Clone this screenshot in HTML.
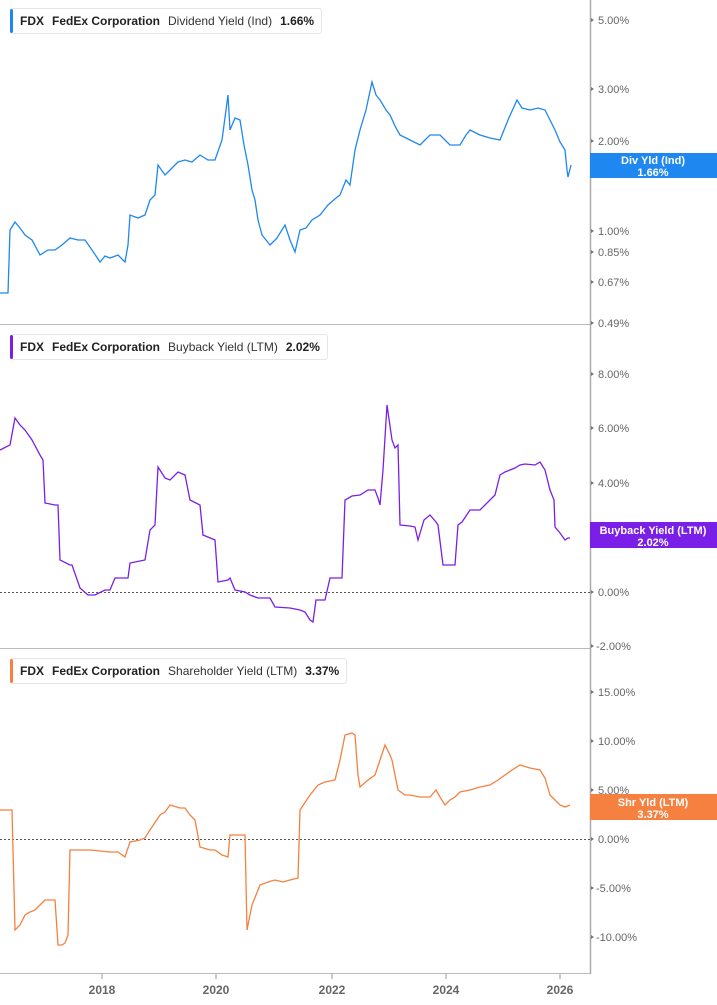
<!DOCTYPE html>
<html><head><meta charset="utf-8"><style>
body{margin:0;background:#fff;width:717px;height:1005px;overflow:hidden;font-family:"Liberation Sans",Arial,sans-serif}
svg text{font-family:"Liberation Sans",Arial,sans-serif}
.t{position:absolute;left:10px;height:24px;border:1px solid #e6e6e6;border-left:none;border-radius:3px;background:#fff;font-size:12px;font-weight:bold;color:#222;line-height:24px;padding:0 7px 0 10px;white-space:nowrap}
.t:before{content:"";position:absolute;left:0;top:0;bottom:0;width:3px;border-radius:2px}
.t span{margin-right:8px}
.t span:last-child{margin-right:0}
.t .n{font-weight:normal;color:#333}
.a:before{background:#1e88f0}.b:before{background:#7a1fe8}.c:before{background:#f5803f}
</style></head><body>
<svg width="717" height="1005" style="position:absolute;left:0;top:0">
<g stroke="#bbb" stroke-width="1"><line x1="0" y1="324.5" x2="590" y2="324.5"/><line x1="0" y1="648.5" x2="590" y2="648.5"/><line x1="0" y1="973.5" x2="590" y2="973.5"/></g>
<line x1="590.5" y1="0" x2="590.5" y2="974" stroke="#aaa" stroke-width="1.5"/>
<g stroke="#555" stroke-width="1" stroke-dasharray="2,2"><line x1="0" y1="592.5" x2="590" y2="592.5"/><line x1="0" y1="839.5" x2="590" y2="839.5"/></g>
<g fill="#777">
<path d="M591 18l3 2-3 2z M591 87l3 2-3 2z M591 139l3 2-3 2z M591 229l3 2-3 2z M591 250l3 2-3 2z M591 280l3 2-3 2z M591 321l3 2-3 2z M591 372l3 2-3 2z M591 426l3 2-3 2z M591 481l3 2-3 2z M591 590l3 2-3 2z M591 644l3 2-3 2z M591 690l3 2-3 2z M591 739l3 2-3 2z M591 788l3 2-3 2z M591 837l3 2-3 2z M591 886l3 2-3 2z M591 935l3 2-3 2z"/>
</g>
<g font-size="11" fill="#666">
<text x="598" y="24">5.00%</text><text x="598" y="93">3.00%</text><text x="598" y="145">2.00%</text><text x="598" y="235">1.00%</text><text x="598" y="256">0.85%</text><text x="598" y="286">0.67%</text><text x="598" y="327">0.49%</text>
<text x="598" y="378">8.00%</text><text x="598" y="432">6.00%</text><text x="598" y="487">4.00%</text><text x="598" y="541">2.00%</text><text x="598" y="596">0.00%</text><text x="596" y="650">-2.00%</text>
<text x="598" y="696">15.00%</text><text x="598" y="745">10.00%</text><text x="598" y="794">5.00%</text><text x="598" y="843">0.00%</text><text x="596" y="892">-5.00%</text><text x="596" y="941">-10.00%</text>
</g>
<g font-size="12" font-weight="bold" fill="#666" text-anchor="middle">
<text x="102" y="994">2018</text><text x="216" y="994">2020</text><text x="332" y="994">2022</text><text x="446" y="994">2024</text><text x="560" y="994">2026</text></g>
<g stroke="#999"><line x1="102" y1="974" x2="102" y2="979"/><line x1="216" y1="974" x2="216" y2="979"/><line x1="332" y1="974" x2="332" y2="979"/><line x1="446" y1="974" x2="446" y2="979"/><line x1="560" y1="974" x2="560" y2="979"/></g>
<polyline fill="none" stroke="#1e88f0" stroke-width="1.3" points="0,293 8,293 10,230 15,222 20,228 25,235 32,240 40,255 48,250 55,250 62,245 70,238 78,240 85,240 92,250 100,262 105,256 110,258 118,255 125,262 128,245 130,215 138,218 145,215 150,200 155,195 158,165 165,175 170,170 178,162 185,160 192,162 200,155 208,160 215,160 222,140 228,95 230,130 235,118 240,120 244,145 248,165 252,190 255,200 258,220 262,235 266,240 270,245 277,238 285,225 290,240 295,252 300,230 306,228 312,220 320,215 328,205 336,198 340,195 346,180 350,185 355,150 360,130 366,110 372,82 376,95 380,100 386,110 390,115 396,128 400,135 410,140 420,145 430,135 440,135 450,145 460,145 466,135 470,130 480,135 490,138 500,140 508,120 517,100 522,108 530,110 538,108 545,110 550,120 555,130 560,142 565,150 567,170 568,177 571,165"/>
<polyline fill="none" stroke="#7a1fe8" stroke-width="1.3" points="0,450 10,445 15,418 20,425 25,430 32,440 40,455 43,460 45,503 55,505 58,505 60,560 70,565 72,565 80,588 88,595 95,595 105,590 110,590 115,578 125,578 128,578 130,563 145,560 150,530 155,525 158,467 165,478 170,480 178,472 185,475 188,490 190,500 200,505 203,535 215,540 218,582 228,580 230,578 235,590 245,592 250,595 258,598 270,598 275,607 290,608 300,610 305,612 310,620 313,622 316,600 325,600 330,578 342,578 345,500 352,496 360,495 368,490 375,490 378,498 380,505 383,470 387,405 392,440 395,448 398,445 400,525 410,526 415,527 418,540 424,520 430,515 436,522 438,525 443,565 455,565 458,525 462,522 470,510 480,510 490,500 495,495 500,475 505,472 510,470 515,468 520,465 525,464 535,465 540,462 545,470 550,490 554,500 555,527 560,533 565,540 568,538 570,538"/>
<polyline fill="none" stroke="#f5803f" stroke-width="1.3" points="0,810 12,810 15,930 20,925 25,915 30,912 35,910 40,905 45,900 55,900 58,945 62,945 65,943 68,935 70,850 80,850 90,850 100,851 110,852 118,852 125,857 130,842 140,840 145,838 150,830 160,815 165,812 170,805 180,808 185,808 190,815 195,820 200,847 210,850 215,850 222,855 228,857 230,835 240,835 245,835 247,930 252,905 260,885 268,882 275,880 283,882 290,880 298,878 300,810 310,795 318,785 325,782 335,780 340,760 345,735 352,733 355,735 358,775 360,787 368,780 375,775 380,760 385,745 390,755 392,760 398,790 405,795 410,795 420,797 430,797 436,790 440,797 445,805 450,800 455,797 460,792 470,790 480,787 490,785 498,780 505,775 512,770 520,765 530,768 540,770 545,778 550,795 555,800 560,805 565,807 570,805"/>
<rect x="590" y="153" width="127" height="25" fill="#1e88f0"/>
<rect x="590" y="522" width="127" height="26" fill="#7a1fe8"/>
<rect x="590" y="794" width="127" height="26" fill="#f5803f"/>
<g font-size="11" font-weight="bold" fill="#fff" text-anchor="middle">
<text x="653" y="164">Div Yld (Ind)</text><text x="653" y="176">1.66%</text>
<text x="653" y="534">Buyback Yield (LTM)</text><text x="653" y="546">2.02%</text>
<text x="653" y="806">Shr Yld (LTM)</text><text x="653" y="818">3.37%</text>
</g>
</svg>
<div class="t a" style="top:8px"><span>FDX</span><span>FedEx Corporation</span><span class="n">Dividend Yield (Ind)</span><span>1.66%</span></div>
<div class="t b" style="top:334px"><span>FDX</span><span>FedEx Corporation</span><span class="n">Buyback Yield (LTM)</span><span>2.02%</span></div>
<div class="t c" style="top:658px"><span>FDX</span><span>FedEx Corporation</span><span class="n">Shareholder Yield (LTM)</span><span>3.37%</span></div>
</body></html>
